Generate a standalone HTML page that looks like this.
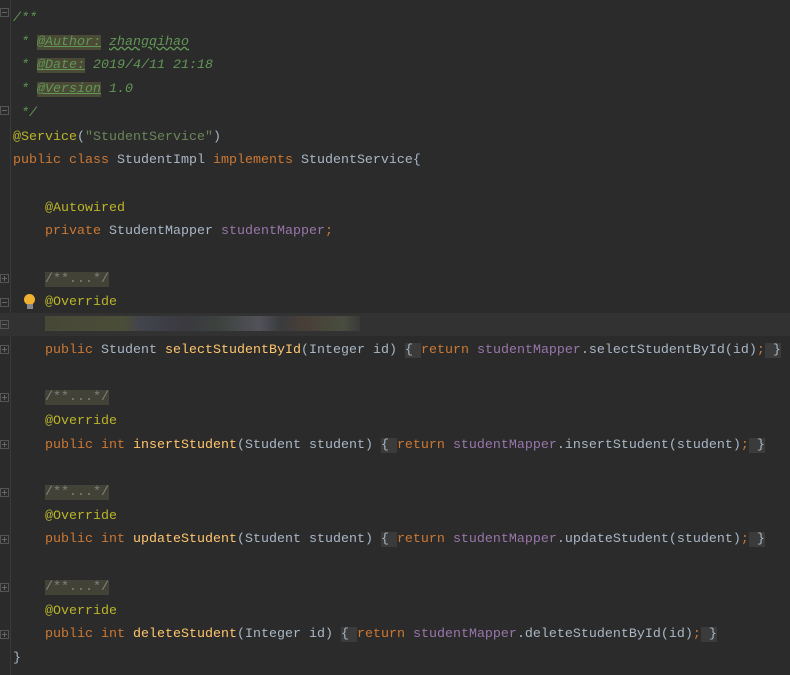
<!DOCTYPE html>
<html><head><meta charset="utf-8"><style>
body{margin:0;width:790px;height:675px;background:#2b2b2b;overflow:hidden;position:relative;font-family:"Liberation Mono",monospace;font-size:13.33px;color:#a9b7c6}
.l{position:absolute;left:13px;height:23.7px;line-height:23.7px;white-space:pre;margin-top:2px}
.c{color:#629755;font-style:italic}
.t{background:#4a4a36;text-decoration:underline}
.a{color:#bbb529}.k{color:#cc7832}.f{color:#9876aa}.m{color:#ffc66d}
.fold{color:#808080;background:#424236}
.b{background:#3b3b3b}
.g{position:absolute;left:0;width:9px;height:9px;border:1px solid #555;box-sizing:border-box}
.g:after{content:"";position:absolute;left:1px;right:1px;top:3px;height:1px;background:#666}
.p:before{content:"";position:absolute;top:1px;bottom:1px;left:3px;width:1px;background:#666}
</style></head><body>
<div style="position:absolute;left:10px;top:0;width:1px;height:675px;background:#3a3a3a"></div>
<div style="position:absolute;left:0;top:313px;width:790px;height:23px;background:#323232"></div>
<div style="position:absolute;left:45px;top:316px;width:315px;height:15px;background:linear-gradient(90deg,#4a4a38 0,#4d5038 25%,#444650 30%,#3a3a40 45%,#3e4440 55%,#55555e 68%,#3b3c3e 75%,#4b4038 82%,#4a5040 95%,#3a3a3a 100%);opacity:.9"></div>
<div class="g" style="top:8px"></div><div class="g" style="top:106px"></div>
<div class="g p" style="top:274px"></div><div class="g" style="top:298px"></div><div class="g" style="top:320px"></div><div class="g p" style="top:345px"></div>
<div class="g p" style="top:393px"></div><div class="g p" style="top:440px"></div><div class="g p" style="top:488px"></div><div class="g p" style="top:535px"></div><div class="g p" style="top:583px"></div><div class="g p" style="top:630px"></div>
<div style="position:absolute;left:24px;top:294px;width:11px;height:11px;border-radius:50%;background:#f0b030"></div>
<div style="position:absolute;left:27px;top:304px;width:6px;height:5px;background:#888"></div>

<div class="l c" style="top:5px">/**</div>
<div class="l c" style="top:28.7px"> * <span class="t">@Author:</span> <span style="text-decoration:underline wavy #629755">zhangqihao</span></div>
<div class="l c" style="top:52.4px"> * <span class="t">@Date:</span> 2019/4/11 21:18</div>
<div class="l c" style="top:76.1px"> * <span class="t">@Version</span> 1.0</div>
<div class="l c" style="top:99.8px"> */</div>
<div class="l" style="top:123.5px"><span class="a">@Service</span>(<span style="color:#6a8759">"StudentService"</span>)</div>
<div class="l" style="top:147.2px"><span class="k">public class</span> StudentImpl <span class="k">implements</span> StudentService{</div>
<div class="l" style="top:194.6px">    <span class="a">@Autowired</span></div>
<div class="l" style="top:218.3px">    <span class="k">private</span> StudentMapper <span class="f">studentMapper</span><span class="k">;</span></div>
<div class="l" style="top:265.7px">    <span class="fold">/**...*/</span></div>
<div class="l" style="top:289.4px">    <span class="a">@Override</span></div>
<div class="l" style="top:336.8px">    <span class="k">public</span> Student <span class="m">selectStudentById</span>(Integer id) <span class="b">{ </span><span class="k">return</span> <span class="f">studentMapper</span>.selectStudentById(id)<span class="k">;</span><span class="b"> }</span></div>
<div class="l" style="top:384.2px">    <span class="fold">/**...*/</span></div>
<div class="l" style="top:407.9px">    <span class="a">@Override</span></div>
<div class="l" style="top:431.6px">    <span class="k">public int</span> <span class="m">insertStudent</span>(Student student) <span class="b">{ </span><span class="k">return</span> <span class="f">studentMapper</span>.insertStudent(student)<span class="k">;</span><span class="b"> }</span></div>
<div class="l" style="top:479px">    <span class="fold">/**...*/</span></div>
<div class="l" style="top:502.7px">    <span class="a">@Override</span></div>
<div class="l" style="top:526.4px">    <span class="k">public int</span> <span class="m">updateStudent</span>(Student student) <span class="b">{ </span><span class="k">return</span> <span class="f">studentMapper</span>.updateStudent(student)<span class="k">;</span><span class="b"> }</span></div>
<div class="l" style="top:573.8px">    <span class="fold">/**...*/</span></div>
<div class="l" style="top:597.5px">    <span class="a">@Override</span></div>
<div class="l" style="top:621.2px">    <span class="k">public int</span> <span class="m">deleteStudent</span>(Integer id) <span class="b">{ </span><span class="k">return</span> <span class="f">studentMapper</span>.deleteStudentById(id)<span class="k">;</span><span class="b"> }</span></div>
<div class="l" style="top:644.9px">}</div>
</body></html>
